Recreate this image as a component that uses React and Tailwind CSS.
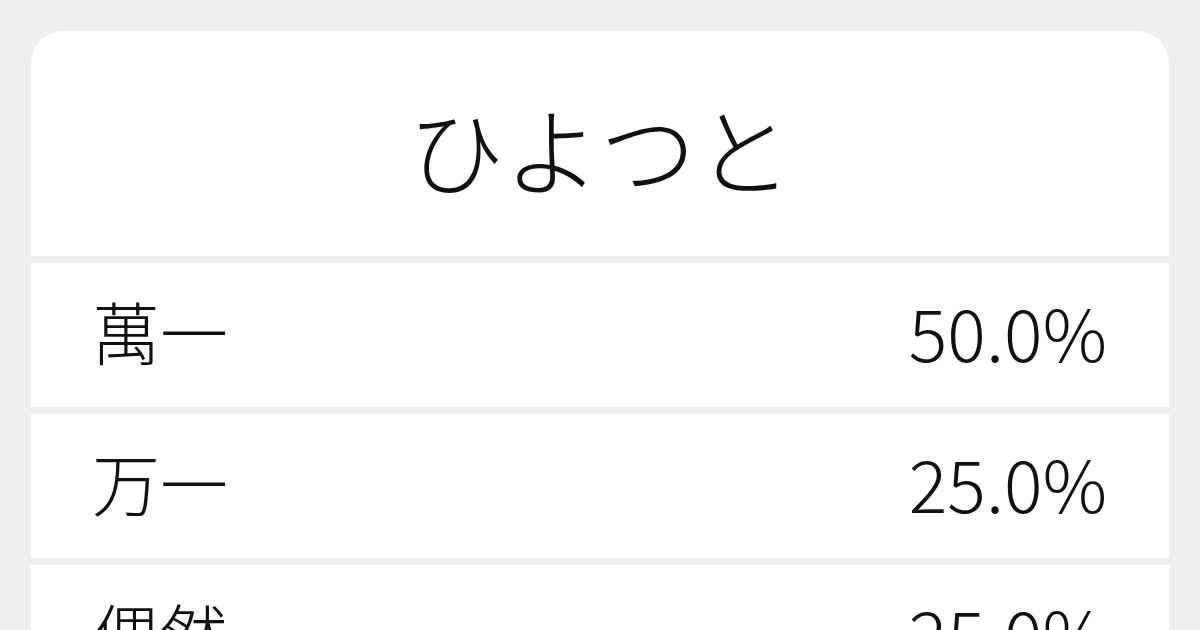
import React from "react";

const rows = [
  { word: "萬一", pct: "50.0%" },
  { word: "万一", pct: "25.0%" },
  { word: "偶然", pct: "25.0%" },
];

function App() {
  return (
    <div
      className="h-[630px] overflow-hidden bg-[#eeeeee] px-[31px] pt-[31px] text-[#111111]"
      style={{ fontFamily: '"Noto Sans CJK JP", "Noto Sans", sans-serif' }}
    >
      <div className="flex flex-col gap-[7px] overflow-hidden rounded-t-[32px]">
        {/* title */}
        <div className="flex h-[225px] items-center justify-center bg-white pt-[6px]">
          <h1 className="text-[96px] font-light leading-none">ひよつと</h1>
        </div>

        {/* rows */}
        {rows.map(r => (
          <div
            key={r.word}
            className="flex h-[144px] shrink-0 items-center justify-between bg-white pb-[8px] pl-[61px] pr-[62px]"
          >
            <span className="text-[68px] font-light leading-none">{r.word}</span>
            <span className="text-[72px] font-light leading-none">{r.pct}</span>
          </div>
        ))}
      </div>
    </div>
  );
}

export default App;
